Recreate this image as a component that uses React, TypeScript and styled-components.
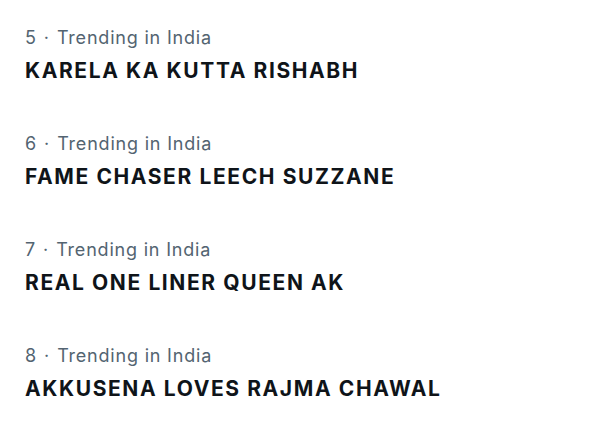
import React from "react";
import styled, { createGlobalStyle } from "styled-components";

const GlobalStyle = createGlobalStyle`
  html, body {
    margin: 0;
    padding: 0;
    background: #ffffff;
  }
  body {
    font-family: Inter, "Noto Sans", sans-serif;
    -webkit-font-smoothing: antialiased;
  }
`;

const List = styled.div`
  display: flex;
  flex-direction: column;
  padding: 25px 25px 0;
`;

const Trend = styled.div`
  display: flex;
  flex-direction: column;
  height: 106px;
`;

const Meta = styled.div`
  display: flex;
  align-items: baseline;
  font-size: 18px;
  line-height: 26px;
  letter-spacing: 0.8px;
  color: #536471;
`;

const Dot = styled.span`
  margin: 0 8px 0 7px;
  letter-spacing: 0;
`;

const Title = styled.div`
  font-size: 21px;
  font-weight: 700;
  line-height: 26px;
  letter-spacing: 1.6px;
  margin-top: 7px;
  color: #0f1419;
`;

const trends = [
  { rank: 5, name: "KARELA KA KUTTA RISHABH" },
  { rank: 6, name: "FAME CHASER LEECH SUZZANE" },
  { rank: 7, name: "REAL ONE LINER QUEEN AK" },
  { rank: 8, name: "AKKUSENA LOVES RAJMA CHAWAL" },
];

export default function App() {
  return (
    <>
      <GlobalStyle />
      <List>
        {trends.map((t) => (
          <Trend key={t.rank}>
            <Meta>
              <span>{t.rank}</span>
              <Dot>·</Dot>
              <span>Trending in India</span>
            </Meta>
            <Title>{t.name}</Title>
          </Trend>
        ))}
      </List>
    </>
  );
}
